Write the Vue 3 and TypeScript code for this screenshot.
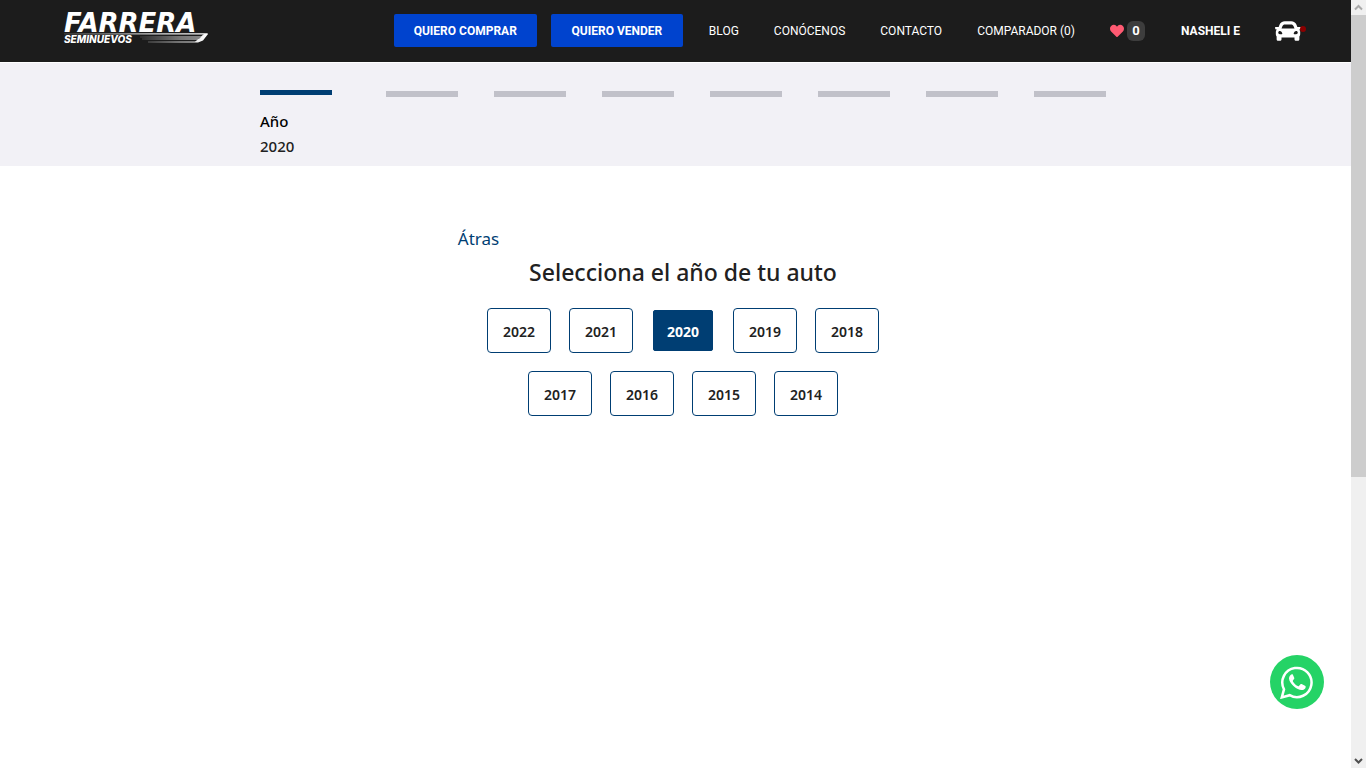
<script setup lang="ts">
import { ref } from 'vue'

interface NavLink {
  label: string
  href: string
}

const navLinks: NavLink[] = [
  { label: 'BLOG', href: '#blog' },
  { label: 'CONÓCENOS', href: '#conocenos' },
  { label: 'CONTACTO', href: '#contacto' },
  { label: 'COMPARADOR (0)', href: '#comparador' },
]

const yearRows: number[][] = [
  [2022, 2021, 2020, 2019, 2018],
  [2017, 2016, 2015, 2014],
]

const pendingSteps = 7
const selectedYear = ref<number>(2020)
</script>

<template>
  <div class="page">
    <header class="topbar">
      <a class="brand" href="#inicio" aria-label="Farrera Seminuevos">
        <svg width="146" height="30" viewBox="0 0 146 30">
          <defs>
            <linearGradient id="streak" x1="0" x2="1" y1="0" y2="0">
              <stop offset="0" stop-color="#fff" stop-opacity="0.15" />
              <stop offset="0.6" stop-color="#fff" stop-opacity="0.8" />
              <stop offset="1" stop-color="#fff" />
            </linearGradient>
          </defs>
          <text class="brand-name" x="0" y="18">FARRERA</text>
          <path d="M0 19.2H144L143 20.6H0z" fill="url(#streak)" />
          <text class="brand-sub" x="0" y="29">SEMINUEVOS</text>
          <path d="M76 22.4H137L140 20H144L139 26.5L134 28.5H84V27.4H131L134 25.6H78V24.6H135L137 23.4H76z" fill="url(#streak)" />
        </svg>
      </a>

      <nav class="menu">
        <a class="cta" href="#comprar">QUIERO COMPRAR</a>
        <a class="cta" href="#vender">QUIERO VENDER</a>
        <a v-for="link in navLinks" :key="link.label" class="link" :href="link.href">{{ link.label }}</a>
        <a class="link favorites" href="#favoritos" aria-label="Favoritos">
          <svg width="14" height="14" viewBox="0 0 512 512">
            <path
              fill="#ff5a72"
              d="M462.3 62.6C407.5 15.9 326 24.3 275.7 76.2L256 96.5l-19.7-20.3C186.1 24.3 104.5 15.9 49.7 62.6c-62.8 53.6-66.1 149.8-9.9 207.9l193.5 199.8c12.5 12.9 32.8 12.9 45.3 0l193.5-199.8c56.3-58.1 53-154.3-9.8-207.9z"
            />
          </svg>
          <span class="count">0</span>
        </a>
        <a class="link user" href="#cuenta">NASHELI E</a>
        <a class="car" href="#mi-auto" aria-label="Mi auto">
          <svg width="26" height="26" viewBox="0 0 512 512">
            <path
              fill="#fff"
              d="M499.99 176h-59.87l-16.64-41.6C406.38 91.63 365.57 64 319.5 64h-127c-46.06 0-86.88 27.63-103.99 70.4L71.87 176H12.01C4.2 176-1.53 183.34.37 190.91l6 24C7.7 220.25 12.5 224 18.01 224h20.07C24.65 235.73 16 252.78 16 272v48c0 16.12 6.16 30.67 16 41.93V416c0 17.67 14.33 32 32 32h32c17.67 0 32-14.33 32-32v-32h256v32c0 17.67 14.33 32 32 32h32c17.67 0 32-14.33 32-32v-54.07c9.84-11.25 16-25.8 16-41.93v-48c0-19.22-8.65-36.27-22.07-48H494c5.51 0 10.31-3.75 11.64-9.09l6-24c1.89-7.57-3.84-14.91-11.65-14.91zm-352.06-17.83c7.29-18.22 24.94-30.17 44.57-30.17h127c19.63 0 37.28 11.95 44.57 30.17L384 208H128l19.93-49.83zM96 319.8c-19.2 0-32-12.76-32-31.9S76.8 256 96 256s48 28.71 48 47.85-28.8 15.95-48 15.95zm320 0c-19.2 0-48 3.19-48-15.95S396.8 256 416 256s32 12.76 32 31.9-12.8 31.9-32 31.9z"
            />
          </svg>
          <span class="dot"></span>
        </a>
      </nav>
    </header>

    <section class="progress">
      <ol class="steps">
        <li class="step current">
          <span class="bar"></span>
          <span class="step-name">Año</span>
          <span class="step-value">{{ selectedYear }}</span>
        </li>
        <li v-for="n in pendingSteps" :key="n" class="step"><span class="bar"></span></li>
      </ol>
    </section>

    <main class="chooser">
      <a class="back" href="#atras">Átras</a>
      <h1>Selecciona el año de tu auto</h1>
      <div v-for="(row, i) in yearRows" :key="i" class="years">
        <button
          v-for="year in row"
          :key="year"
          type="button"
          class="year"
          :class="{ selected: year === selectedYear }"
          :aria-pressed="year === selectedYear"
          @click="selectedYear = year"
        >
          {{ year }}
        </button>
      </div>
    </main>

    <a class="whatsapp" href="#whatsapp" aria-label="WhatsApp">
      <svg width="34" height="34" viewBox="0 0 34 34">
        <path d="M1.8 32.4L4 24.3A14.6 14.6 0 1 1 9.7 30.2z" fill="none" stroke="#fff" stroke-width="2.5" stroke-linejoin="miter" />
        <path
          fill="#fff"
          d="M11.9 9.2C10.5 9.6 9 11.4 9 13.6C9.2 16.6 11.6 19.5 14 21.6C16.4 23.7 19.6 25.2 21.6 25.1C23.7 25 25.4 23.6 25.6 22.4C25.8 21.4 25.6 21 25 20.7L21.6 19.1C21 18.9 20.7 19 20.3 19.4L18.9 21C18.5 21.4 18.2 21.3 17.8 21.1C15.4 19.9 14 18.4 12.9 16.5C12.6 16 12.8 15.7 13.1 15.3L14.2 13.8C14.4 13.4 14.4 13.1 14.2 12.7L12.9 9.7C12.7 9.2 12.4 9.1 11.9 9.2z"
        />
      </svg>
    </a>

    <div class="scrollbar" aria-hidden="true">
      <svg width="15" height="15" viewBox="0 0 15 15"><path d="M4 9.5L7.5 6L11 9.5" fill="none" stroke="#a9a9a9" stroke-width="2" /></svg>
      <span class="thumb"></span>
      <span class="track"></span>
      <svg width="15" height="15" viewBox="0 0 15 15"><path d="M4 6L7.5 9.5L11 6" fill="none" stroke="#505050" stroke-width="2" /></svg>
    </div>
  </div>
</template>

<style>
body {
  margin: 0;
  background: #fff;
}
</style>

<style scoped>
* {
  box-sizing: border-box;
}

.page {
  min-height: 100vh;
  color: #212121;
  font-family: 'Noto Sans', 'Open Sans', sans-serif;
}

a {
  text-decoration: none;
}

.topbar {
  display: flex;
  align-items: center;
  justify-content: space-between;
  height: 62px;
  padding: 0 60px 0 64px;
  background: #1c1c1c;
}

.brand {
  display: flex;
  margin-bottom: 4px;
}

.brand svg {
  overflow: visible;
}

.brand-name {
  fill: #fff;
  font: italic 700 26px 'DejaVu Sans', sans-serif;
}

.brand-sub {
  fill: #fff;
  font: italic 800 10px Inter, sans-serif;
}

.menu {
  display: flex;
  align-items: center;
  gap: 35px;
  font-family: Roboto, sans-serif;
  font-size: 12px;
  line-height: 18px;
}

.cta {
  min-width: 132px;
  margin-bottom: 2px;
  padding: 8px 20px 7px;
  border-radius: 2px;
  background: #0043ce;
  color: #fff;
  font-weight: 700;
  text-align: center;
}

.cta + .cta {
  margin-left: -21px;
}

.cta + .link {
  margin-left: -9px;
}

.link {
  color: #fff;
}

.favorites {
  display: flex;
  align-items: center;
  gap: 3px;
  margin-right: 1px;
}

.count {
  width: 18px;
  padding: 1px 0;
  border-radius: 6px;
  background: #3d3d3d;
  font-size: 13px;
  font-weight: 700;
  text-align: center;
}

.user {
  font-weight: 700;
}

.car {
  display: flex;
  align-items: center;
}

.dot {
  width: 6px;
  height: 6px;
  margin: 0 0 4px -1px;
  border-radius: 50%;
  background: #8b0000;
}

.progress {
  margin-top: 1px;
  padding: 27px 0 7px;
  background: #f2f1f6;
}

.steps {
  display: flex;
  justify-content: center;
  gap: 36px;
  margin: 0;
  padding: 0;
  list-style: none;
}

.step {
  padding-top: 1px;
}

.bar {
  display: block;
  width: 72px;
  height: 6px;
  background: #c1c1c9;
}

.current {
  display: flex;
  flex-direction: column;
  width: 90px;
  padding-top: 0;
  font-size: 15px;
  font-weight: 500;
  line-height: 25px;
}

.current .bar {
  height: 5px;
  margin-bottom: 14px;
  background: #003e73;
}

.step-name {
  color: #000;
}

.chooser {
  display: flex;
  flex-direction: column;
  align-items: center;
  width: 34%;
  margin: 0 auto;
  padding: 60px 7px 0;
}

.back {
  align-self: flex-start;
  color: #003e73;
  font-size: 17px;
  line-height: 26px;
}

h1 {
  margin: 4px 0 20px;
  font-size: 23px;
  font-weight: 500;
  line-height: 32px;
  white-space: nowrap;
}

.years {
  display: flex;
  justify-content: center;
  align-items: center;
  gap: 18px;
  margin-bottom: 18px;
}

.year {
  width: 64px;
  height: 45px;
  padding: 2px 0 0;
  border: 1px solid #003e73;
  border-radius: 4px;
  background: #fff;
  color: #212121;
  font-family: inherit;
  font-size: 14px;
  font-weight: 600;
}

.year.selected {
  width: 60px;
  height: 41px;
  margin: 0 2px;
  border-radius: 2px;
  background: #003e73;
  color: #fff;
  font-weight: 700;
}

.whatsapp {
  position: fixed;
  right: 42px;
  bottom: 59px;
  display: flex;
  align-items: center;
  justify-content: center;
  width: 54px;
  height: 54px;
  border-radius: 50%;
  background: #25d366;
}

.scrollbar {
  position: fixed;
  top: 0;
  right: 0;
  bottom: 0;
  display: flex;
  flex-direction: column;
  width: 15px;
  background: #f0f0f0;
}

.thumb {
  flex: 462;
  background: #cdcdcd;
}

.track {
  flex: 276;
}
</style>
